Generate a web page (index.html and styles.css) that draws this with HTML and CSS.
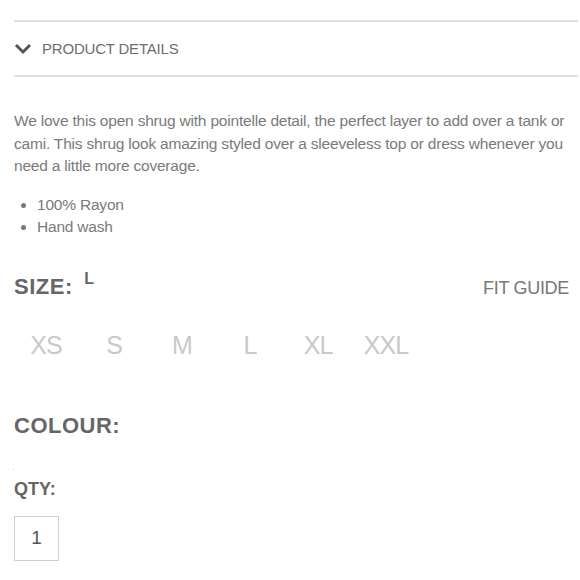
FILE: index.html
```html
<!DOCTYPE html>
<html>
<head>
<meta charset="utf-8">
<link rel="stylesheet" href="styles.css">
</head>
<body>
<div class="page">
  <div class="accordion">
    <svg class="chev" width="18" height="12" viewBox="0 0 18 12"><path d="M2 2 L9 9 L16 2" fill="none" stroke="#555" stroke-width="3"/></svg>
    <span class="acc-title">PRODUCT DETAILS</span>
  </div>
  <p class="desc">We love this open shrug with pointelle detail, the perfect layer to add over a tank or cami. This shrug look amazing styled over a sleeveless top or dress whenever you need a little more coverage.</p>
  <ul class="bullets">
    <li>100% Rayon</li>
    <li>Hand wash</li>
  </ul>
  <div class="size-head">
    <div class="size-label">SIZE: <span class="size-sel">L</span></div>
    <a class="fit">FIT GUIDE</a>
  </div>
  <div class="sizes">
    <span>XS</span><span>S</span><span>M</span><span>L</span><span>XL</span><span>XXL</span>
  </div>
  <div class="colour">COLOUR:</div>
  <div class="dot"></div>
  <div class="qty">QTY:</div>
  <div class="qty-box">1</div>
</div>
</body>
</html>
```
FILE: styles.css
```css
html, body { margin: 0; padding: 0; background: #fff; }
body { font-family: "Liberation Sans", Arial, sans-serif; color: #777; }
.page { padding: 20px 2px 0 14px; }
.accordion {
  display: flex; align-items: center; gap: 10px;
  height: 53px;
  border-top: 2px solid #e0e0e0;
  border-bottom: 2px solid #e0e0e0;
}
.chev { display: block; }
.acc-title { font-size: 15px; color: #6e6e6e; letter-spacing: -0.2px; }
.desc { margin: 33px 0 0; font-size: 15.5px; line-height: 22.5px; color: #7a7a7a; letter-spacing: -0.2px; padding-right: 6px; }
.bullets { margin: 16px 0 0; padding: 0 0 0 23px; font-size: 15.5px; line-height: 22px; color: #7a7a7a; letter-spacing: -0.2px; }
.size-head { display: flex; justify-content: space-between; align-items: flex-end; margin-top: 32px; padding-right: 9px; }
.size-label { font-size: 22px; font-weight: bold; color: #666; letter-spacing: 0.5px; }
.size-sel { font-size: 16px; vertical-align: 10px; margin-left: 5px; letter-spacing: 0; }
.fit { font-size: 18px; color: #777; letter-spacing: -0.3px; padding-bottom: 1px; }
.sizes { display: flex; gap: 4px; margin-top: 31px; }
.sizes span { width: 64px; text-align: center; font-size: 25px; color: #c9c9c9; letter-spacing: -1px; }
.colour { margin-top: 53px; font-size: 22px; font-weight: bold; color: #666; letter-spacing: 0.5px; }
.dot { width: 1px; height: 1px; background: #ccc; margin: 30px 0 0 -1px; }
.qty { margin-top: 9px; font-size: 18px; font-weight: bold; color: #666; }
.qty-box {
  margin-top: 16px; width: 43px; height: 43px; border: 1px solid #cfcfcf;
  display: flex; align-items: center; justify-content: center;
  font-size: 19px; color: #555;
}
```
